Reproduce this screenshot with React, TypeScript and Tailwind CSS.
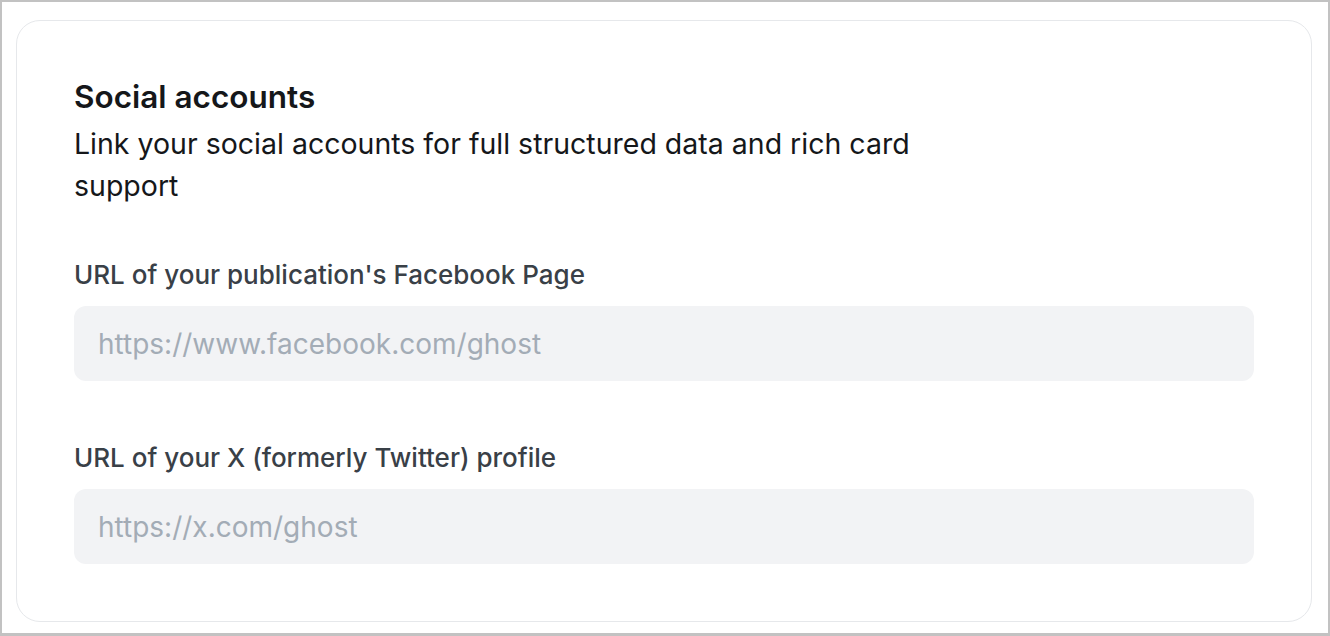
export default function App() {
  return (
    <div className="h-[636px] w-[1330px] border-2 border-b-[3px] border-[#c2c2c2] bg-white pt-[18px] pl-[14px] font-['Inter',sans-serif]">
      <div className="w-[1296px] h-[602px] rounded-[24px] border border-[#e6e8eb] px-[57px] pt-[56px]">
        <h2 className="text-[31.5px] leading-[40px] font-semibold text-[#15171a]">
          Social accounts
        </h2>
        <p className="mt-[6px] max-w-[900px] text-[28.5px] leading-[42px] text-[#15171a]">
          Link your social accounts for full structured data and rich card support
        </p>

        <div className="mt-[50px]">
          <label className="block text-[26px] leading-[36px] font-medium text-[#394047]">
            URL of your publication's Facebook Page
          </label>
          <input
            type="text"
            placeholder="https://www.facebook.com/ghost"
            className="mt-[13px] block h-[75px] w-full rounded-[12px] bg-[#f2f3f5] px-[24px] text-[28px] text-[#15171a] outline-none placeholder:text-[#a3acb6]"
          />
        </div>

        <div className="mt-[59px]">
          <label className="block text-[26px] leading-[36px] font-medium text-[#394047]">
            URL of your X (formerly Twitter) profile
          </label>
          <input
            type="text"
            placeholder="https://x.com/ghost"
            className="mt-[13px] block h-[75px] w-full rounded-[12px] bg-[#f2f3f5] px-[24px] text-[28px] text-[#15171a] outline-none placeholder:text-[#a3acb6]"
          />
        </div>
      </div>
    </div>
  );
}
